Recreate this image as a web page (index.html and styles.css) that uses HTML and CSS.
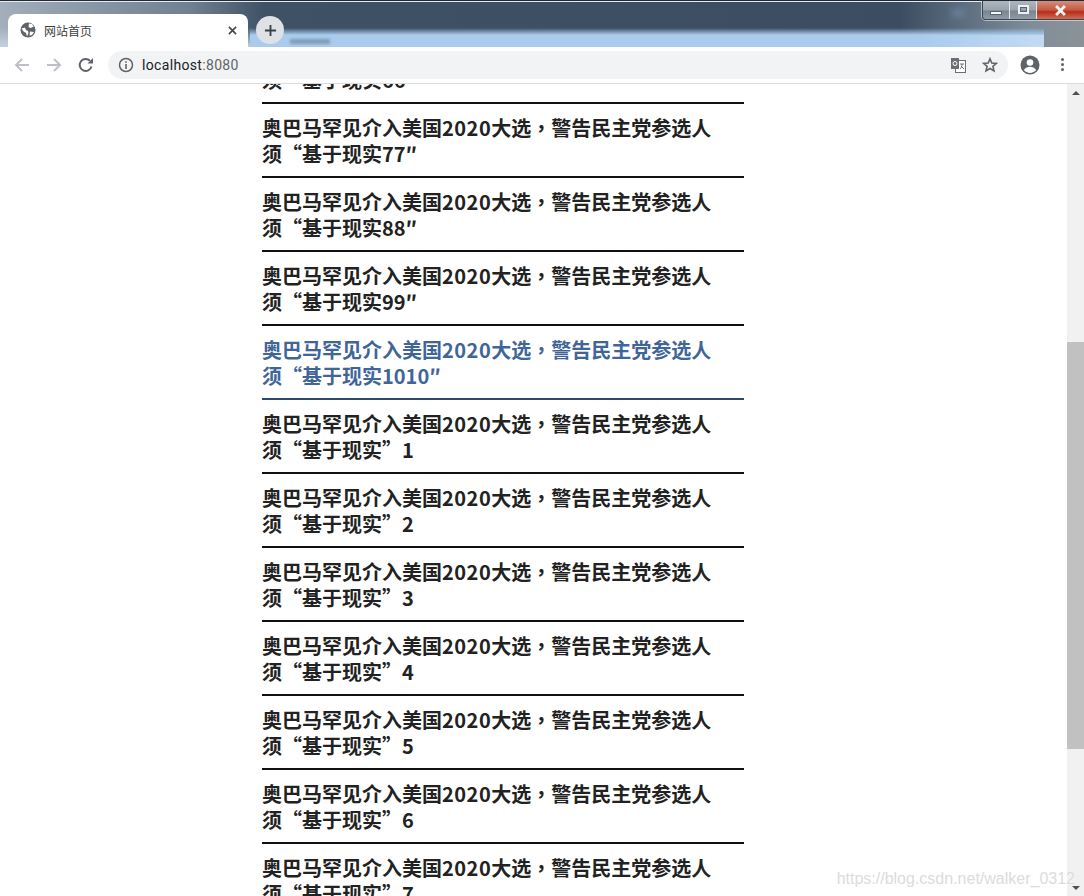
FILE: index.html
```html
<!DOCTYPE html>
<html lang="zh-CN">
<head>
<meta charset="utf-8">
<title>网站首页</title>
<link rel="stylesheet" href="styles.css">
</head>
<body>
<div class="window">
  <header class="tabstrip">
    <div class="blur blur-a"></div>
    <div class="blur blur-b"></div>
    <div class="blur blur-c"></div>
    <div class="blur blur-d"></div>
    <div class="blur blur-e"></div>
    <div class="tab">
      <svg class="favicon" viewBox="0 0 16 16"><circle cx="8" cy="8" r="7.500" fill="#5f6368"/><path d="M1.500 6.500L5 5.500l1 2.500 2 1 .5 2-1.500 3.500-1-3.500L3.500 9.500zM9 1.500l3 .5 1.800 2.500-3 1.500L8.500 5zM10 9.500l4 .5-2 3-2.500 .5z" fill="#fff"/></svg>
      <span class="tab-title">网站首页</span>
      <svg class="tab-close" viewBox="0 0 10 10"><path d="M1 1l8 8M9 1l-8 8" stroke="#45484c" stroke-width="1.800"/></svg>
    </div>
    <div class="newtab"><svg viewBox="0 0 14 14"><path d="M7 1v12M1 7h12" stroke="#3c4043" stroke-width="2"/></svg></div>
    <div class="winctl">
      <div class="wbtn"><i class="wmin"></i></div>
      <div class="wbtn"><i class="wmax"></i></div>
      <div class="wbtn wclose"><svg viewBox="0 0 12 10"><path d="M2 1l8 8M10 1l-8 8" stroke="#f2f2f2" stroke-width="2.600"/></svg></div>
    </div>
  </header>
  <nav class="toolbar">
    <svg class="navicon" viewBox="0 0 16 16"><path d="M15 8H2M8 2L2 8l6 6" fill="none" stroke="#bdc1c6" stroke-width="2"/></svg>
    <svg class="navicon" viewBox="0 0 16 16"><path d="M1 8h13M8 2l6 6-6 6" fill="none" stroke="#bdc1c6" stroke-width="2"/></svg>
    <svg class="navicon" viewBox="0 0 16 16"><path d="M13.500 9.500A6 6 0 1 1 12 3.800" fill="none" stroke="#5f6368" stroke-width="2"/><path d="M9.500 6.500H15V1z" fill="#5f6368"/></svg>
    <div class="omnibox">
      <svg class="info" viewBox="0 0 16 16"><circle cx="8" cy="8" r="6.500" fill="none" stroke="#5f6368" stroke-width="1.500"/><path d="M8 7v5M8 4.200v1.600" stroke="#5f6368" stroke-width="1.600"/></svg>
      <span class="url">localhost<span class="port">:8080</span></span>
      <span class="spacer"></span>
      <svg class="translate" viewBox="0 0 16 16"><rect x="5.500" y="3.500" width="10" height="12" fill="#fff" stroke="#6b6f73"/><rect x="1" y="1" width="8" height="11" fill="#6b6f73"/><circle cx="5" cy="6.500" r="2" fill="none" stroke="#fff" stroke-width="1"/><path d="M10 7h4M12 7c0 3-1 4-2 5M11 9l3 3" stroke="#6b6f73" fill="none"/></svg>
      <svg class="star" viewBox="0 0 16 16"><path d="M8 1.800l1.800 4.200 4.600.4-3.500 3 1.100 4.500L8 11.500l-4 2.400 1.100-4.500-3.500-3 4.600-.4z" fill="none" stroke="#5f6368" stroke-width="1.600"/></svg>
    </div>
    <svg class="avatar" viewBox="0 0 20 20"><circle cx="10" cy="10" r="9.500" fill="#5f6368"/><circle cx="10" cy="7.500" r="3.300" fill="#fff"/><path d="M3.800 15c1.500-2.500 4-3.300 6.200-3.300s4.700.8 6.200 3.300c-1.500 1.800-3.700 2.900-6.200 2.900S5.300 16.800 3.800 15z" fill="#fff"/></svg>
    <div class="dots"><i></i><i></i><i></i></div>
  </nav>
  <main class="viewport">
    <div class="page">
      <ul class="list">
        <li class="item">奥巴马罕见介入美国<span class="year">2020</span>大选<span class="comma" lang="zh-Hant">，</span>警告民主党参选人须“基于现实66″</li>
        <li class="item">奥巴马罕见介入美国<span class="year">2020</span>大选<span class="comma" lang="zh-Hant">，</span>警告民主党参选人须“基于现实77″</li>
        <li class="item">奥巴马罕见介入美国<span class="year">2020</span>大选<span class="comma" lang="zh-Hant">，</span>警告民主党参选人须“基于现实88″</li>
        <li class="item">奥巴马罕见介入美国<span class="year">2020</span>大选<span class="comma" lang="zh-Hant">，</span>警告民主党参选人须“基于现实99″</li>
        <li class="item active">奥巴马罕见介入美国<span class="year">2020</span>大选<span class="comma" lang="zh-Hant">，</span>警告民主党参选人须“基于现实1010″</li>
        <li class="item">奥巴马罕见介入美国<span class="year">2020</span>大选<span class="comma" lang="zh-Hant">，</span>警告民主党参选人须“基于现实”1</li>
        <li class="item">奥巴马罕见介入美国<span class="year">2020</span>大选<span class="comma" lang="zh-Hant">，</span>警告民主党参选人须“基于现实”2</li>
        <li class="item">奥巴马罕见介入美国<span class="year">2020</span>大选<span class="comma" lang="zh-Hant">，</span>警告民主党参选人须“基于现实”3</li>
        <li class="item">奥巴马罕见介入美国<span class="year">2020</span>大选<span class="comma" lang="zh-Hant">，</span>警告民主党参选人须“基于现实”4</li>
        <li class="item">奥巴马罕见介入美国<span class="year">2020</span>大选<span class="comma" lang="zh-Hant">，</span>警告民主党参选人须“基于现实”5</li>
        <li class="item">奥巴马罕见介入美国<span class="year">2020</span>大选<span class="comma" lang="zh-Hant">，</span>警告民主党参选人须“基于现实”6</li>
        <li class="item">奥巴马罕见介入美国<span class="year">2020</span>大选<span class="comma" lang="zh-Hant">，</span>警告民主党参选人须“基于现实”7</li>
      </ul>
    </div>
    <aside class="scrollbar">
      <i class="arrow up"></i>
      <div class="track"><div class="thumb"></div></div>
      <i class="arrow down"></i>
    </aside>
    <div class="watermark">https://blog.csdn.net/walker_0312</div>
  </main>
</div>
</body>
</html>
```
FILE: styles.css
```css
* { box-sizing: border-box; }
html, body { margin: 0; height: 100%; overflow: hidden; background: #fff; }
.window { width: 1084px; height: 896px; display: flex; flex-direction: column; overflow: hidden; }

.tabstrip {
  position: relative;
  height: 47px;
  flex: none;
  display: flex;
  align-items: flex-end;
  padding-left: 8px;
  overflow: hidden;
  background: linear-gradient(90deg, #a3afbb 0, #8e9cab 70px, #6f8092 190px, #3f5165 265px, #3c4d61 900px, #56677a 950px, #7f8d99 1030px, #8b9298 1084px);
  border-top: 1px solid #1f2a36;
  box-shadow: inset 0 1px 0 #e8ecf0;
}
.blur { position: absolute; left: 0; right: 0; bottom: 0; }
.blur-a { height: 19px; left: 250px; right: 40px; background: linear-gradient(180deg, rgba(169,204,238,0) 0, #a9ccee 7px, #a9ccee 100%); }
.blur-b { height: 20px; left: 0; width: 250px; right: auto; background: linear-gradient(180deg, rgba(190,205,220,0) 0, #c4d2df 100%); }
.blur-c { left: 290px; right: auto; bottom: 3px; width: 40px; height: 5px; background: #6f88a3; filter: blur(1.500px); opacity: .7; }
.blur-d { left: auto; right: 40px; height: 12px; width: 120px; background: linear-gradient(90deg, rgba(200,222,245,0), #c3daf3); }
.blur-e { left: auto; right: 120px; bottom: 30px; width: 12px; height: 8px; background: #6f8aa6; filter: blur(3px); opacity: .7; }

.tab {
  position: relative;
  width: 240px;
  height: 33px;
  background: #fff;
  border-radius: 8px 8px 0 0;
  display: flex;
  align-items: center;
  padding: 0 11px 0 12px;
}
.favicon { width: 16px; height: 16px; flex: none; margin-top: -1px; }
.tab-title { margin-left: 8px; flex: 1; font: 12px "Noto Sans CJK SC", sans-serif; color: #3c4043; }
.tab-close { width: 9px; height: 9px; flex: none; }
.newtab {
  position: relative;
  width: 28px;
  height: 28px;
  margin: 0 0 3px 8px;
  border-radius: 50%;
  background: #dee1e6;
  display: flex;
  align-items: center;
  justify-content: center;
}
.newtab svg { width: 13px; height: 13px; }
.winctl {
  position: absolute;
  top: 0;
  right: 0;
  display: flex;
  height: 19px;
  border: 1px solid #3a4550;
  border-top: 0;
  border-right: 0;
  border-radius: 0 0 0 4px;
  overflow: hidden;
  box-shadow: 0 0 0 1px rgba(255,255,255,.5);
}
.wbtn {
  width: 27px;
  display: flex;
  align-items: center;
  justify-content: center;
  border-right: 1px solid #dfe5ea;
  background: linear-gradient(180deg, #aeb7be 0, #98a3ad 50%, #77858f 55%, #8f9ba6 100%);
}
.wclose { width: 47px; border-right: 0; background: linear-gradient(180deg, #cf9080 0, #c8573f 50%, #b52d17 60%, #cf6d55 100%); }
.wclose svg { width: 15px; height: 11px; }
.wmin { width: 12px; height: 4px; margin-top: 6px; background: #f4f6f8; border: 1px solid #59636d; }
.wmax { width: 11px; height: 9px; border: 2px solid #eef1f4; outline: 1px solid #59636d; outline-offset: -3px; margin-bottom: 2px; }

.toolbar {
  height: 37px;
  flex: none;
  display: flex;
  align-items: center;
  background: #fff;
  border-bottom: 1px solid #dadce0;
  padding: 0 14px 1px 14px;
}
.navicon { width: 16px; height: 16px; flex: none; margin-right: 16px; }
.omnibox {
  flex: none;
  width: 900px;
  height: 28px;
  margin-left: -2px;
  background: #f1f3f4;
  border-radius: 14px;
  display: flex;
  align-items: center;
  padding: 0 10px 0 10px;
}
.info { width: 16px; height: 16px; flex: none; }
.url { margin-left: 8px; font: 14px "Roboto", "Liberation Sans", sans-serif; color: #202124; letter-spacing: .33px; }
.port { color: #5f6368; }
.spacer { flex: 1; }
.translate { width: 16px; height: 16px; flex: none; margin-right: 16px; }
.star { width: 16px; height: 16px; flex: none; }
.avatar { width: 20px; height: 20px; flex: none; margin-left: 12px; }
.dots { margin-left: 21px; display: flex; flex-direction: column; gap: 2px; }
.dots i { display: block; width: 3px; height: 3px; border-radius: 50%; background: #5f6368; }

.viewport { position: relative; flex: 1; min-height: 0; display: flex; overflow: hidden; background: #fff; }
.page { flex: 1; min-width: 0; overflow: hidden; padding-left: 262px; }
.list {
  list-style: none;
  margin: -54px 0 0;
  padding: 0;
  width: 482px;
}
.item {
  height: 74px;
  padding: 11px 24px 0 0;
  border-bottom: 2px solid #111;
  font: bold 20px/26px "Noto Sans CJK SC", sans-serif;
  color: #222;
}
.year { letter-spacing: .5px; }
.comma { font-family: "Noto Sans CJK TC", sans-serif; }
.item.active { color: #406599; border-bottom-color: #2e4a6e; }

.scrollbar { width: 17px; flex: none; background: #f1f1f1; display: flex; flex-direction: column; align-items: center; }
.arrow { flex: none; width: 0; height: 0; border-left: 4px solid transparent; border-right: 4px solid transparent; margin: 7px 0 6px; }
.arrow.up { border-bottom: 4px solid #505050; }
.arrow.down { border-top: 4px solid #505050; }
.track { flex: 1; width: 100%; padding-top: 241px; }
.thumb { height: 407px; background: #c1c1c1; }

.watermark {
  position: absolute;
  right: 9px;
  bottom: 8px;
  font: 16px "Liberation Sans", sans-serif;
  color: #dcdcdc;
  text-shadow: 0 0 2px #fff;
}
```
